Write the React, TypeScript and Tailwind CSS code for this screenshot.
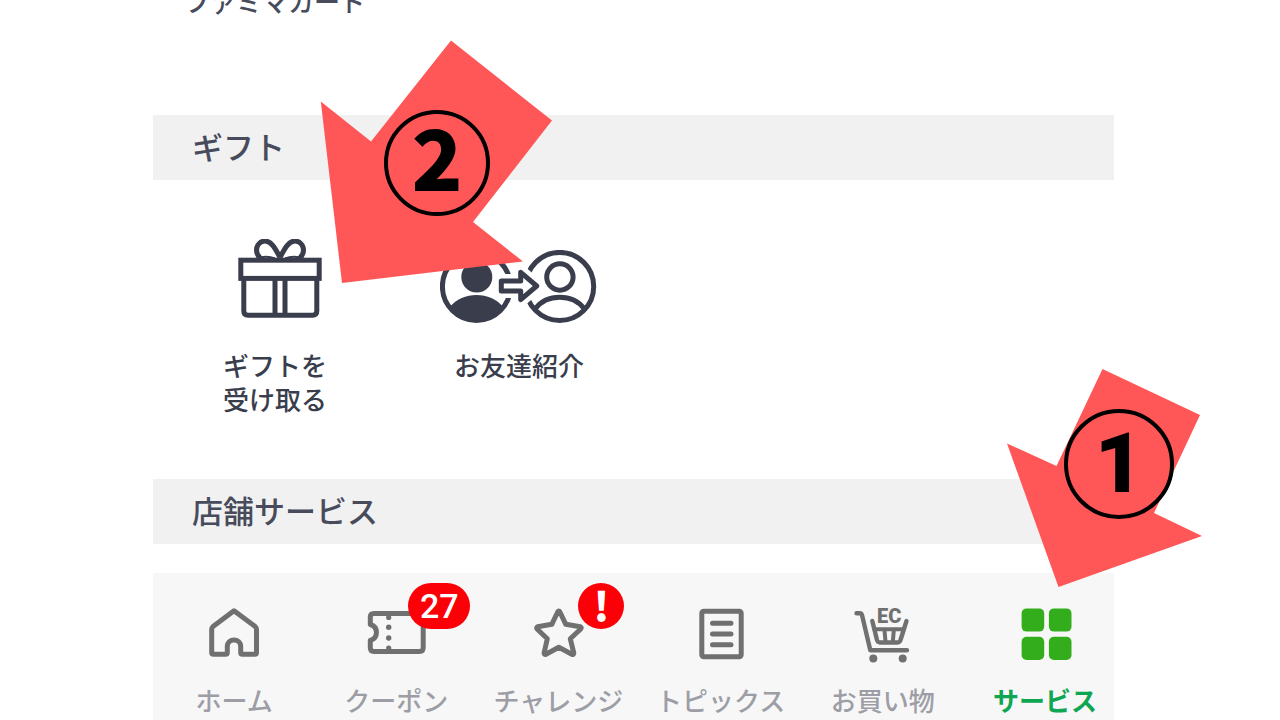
import type { ReactNode } from 'react';

function GiftIcon() {
  return (
    <svg aria-hidden="true" width="96" height="84" viewBox="0 2 96 84" fill="none" stroke="currentColor" strokeWidth="5">
      <path d="M53 20.500C49 13 45 4 38 4C33.500 4 29.500 8 29.500 13C29.500 16.500 31 19.500 34 21.500" />
      <path d="M53 20.500C57 13 61 4 68 4C72.500 4 76.500 8 76.500 13C76.500 16.500 75 19.500 72 21.500" />
      <path d="M33 20.500Q41 18.500 48 21.500M73 20.500Q65 18.500 58 21.500" strokeWidth="2" />
      <rect x="13.800" y="23.200" width="78.400" height="18.200" />
      <path d="M16.800 43V74Q16.800 78.200 21 78.200H85.600Q89.800 78.200 89.800 74V43M48 42V78M58 42V78" />
    </svg>
  );
}

function FriendsIcon() {
  return (
    <svg aria-hidden="true" width="158" height="73" viewBox="0 0 158 73" fill="none" stroke="currentColor" strokeWidth="5">
      <circle cx="36.400" cy="36.400" r="34" />
      <circle cx="36.800" cy="27" r="15.500" fill="currentColor" stroke="none" />
      <path d="M10 57C22 41 51 41 63 57C51 76 22 76 10 57Z" fill="currentColor" stroke="none" />
      <circle cx="119.700" cy="36.400" r="34" />
      <circle cx="119.900" cy="27" r="13.200" />
      <path d="M95.500 58.500C107 43.500 132.500 43.500 144 58.500" />
      <path d="M61.300 31H80.700V22.300L96.700 36L80.700 49.700V41H61.300Z" fill="white" stroke="white" strokeWidth="14" />
      <path d="M61.300 31H80.700V22.300L96.700 36L80.700 49.700V41H61.300Z" fill="white" strokeLinejoin="round" />
    </svg>
  );
}

function HomeIcon() {
  return (
    <svg aria-hidden="true" width="56" height="56" viewBox="0 0 56 56" fill="none" stroke="currentColor" strokeWidth="5" strokeLinejoin="round">
      <path d="M28 5.800L7 21.600Q5.700 22.700 5.700 24.500V47.500Q5.700 49.300 7.500 49.300H19.500Q21.300 49.300 21.300 47.500V41.500C21.300 32.800 34.700 32.800 34.700 41.500V47.500Q34.700 49.300 36.500 49.300H48.700Q50.500 49.300 50.500 47.500V24.500Q50.500 22.700 49.200 21.600Z" />
    </svg>
  );
}

function TicketIcon() {
  return (
    <svg aria-hidden="true" width="64" height="56" viewBox="0 0 64 56" fill="none" stroke="currentColor" strokeWidth="5" strokeLinejoin="round">
      <path d="M10 8.400H55.500Q59.200 8.400 59.200 12V42.800Q59.200 46.500 55.500 46.500H10Q6.300 46.500 6.300 42.800V35.500C14.500 33 14.500 22 6.300 19.500V12Q6.300 8.400 10 8.400Z" />
      <g fill="currentColor" stroke="none">
        <circle cx="24.700" cy="12.500" r="2.600" />
        <circle cx="24.700" cy="22.300" r="2.700" />
        <circle cx="24.700" cy="33" r="2.700" />
        <circle cx="24.700" cy="43" r="2.600" />
      </g>
    </svg>
  );
}

function StarIcon() {
  return (
    <svg aria-hidden="true" width="56" height="56" viewBox="-1 0 56 56" fill="none" stroke="currentColor" strokeWidth="5" strokeLinejoin="round">
      <path d="M26.700 7Q27.800 5 28.900 7L34.800 19.300L49.300 21.800Q51 22.700 49.700 24L39.300 33.800L42.800 48Q42.600 50 40.800 49.300L27.800 42.200L15 49.300Q13 49.800 13.100 48L16.300 33.800L6.100 24Q5 22.700 6.600 21.800L20.800 19.300Z" />
    </svg>
  );
}

function ListIcon() {
  return (
    <svg aria-hidden="true" width="56" height="56" viewBox="0 0 56 56" fill="none" stroke="currentColor" strokeWidth="5" strokeLinecap="round">
      <rect x="8.800" y="6.200" width="39.400" height="45.600" rx="2" />
      <path d="M19.500 18.300H38M19.500 29H38M19.500 39.700H38" />
    </svg>
  );
}

function CartIcon() {
  return (
    <svg aria-hidden="true" width="60" height="58" viewBox="0 0 60 58" fill="none" stroke="currentColor" strokeWidth="4.400" strokeLinecap="round" strokeLinejoin="round" className="-mb-0.5">
      <path d="M3.500 8.200H6.500Q8.500 8.200 9 10L17.300 45.200H54" />
      <path d="M19.300 16L24 35Q24.700 37.500 27 37.500H44.500Q46.800 37.500 47.500 35L53.500 16" />
      <path d="M21.500 24.300H50.500M31.500 25L32.500 37M40.800 25L39.800 37" strokeWidth="4" />
      <circle cx="20.300" cy="53.500" r="4" fill="currentColor" stroke="none" />
      <circle cx="49.700" cy="53.500" r="4" fill="currentColor" stroke="none" />
      <text x="24" y="18" fill="currentColor" stroke="none" className="font-['Roboto',sans-serif] text-[20px] font-black">EC</text>
    </svg>
  );
}

function GridIcon() {
  return (
    <svg aria-hidden="true" width="56" height="56" viewBox="-1 0 56 56" fill="#34ad1c">
      <rect x="3.600" y="3.400" width="22.600" height="23.200" rx="5" />
      <rect x="30.900" y="3.400" width="22.600" height="23.200" rx="5" />
      <rect x="3.600" y="31.800" width="22.600" height="23.200" rx="5" />
      <rect x="30.900" y="31.800" width="22.600" height="23.200" rx="5" />
    </svg>
  );
}

function SectionTitle({ children }: { children: ReactNode }) {
  return (
    <h2 className="h-[65px] bg-[#f1f1f1] px-[39px] pt-3 text-[31px] leading-[38px] font-medium text-[#474b5b]">
      {children}
    </h2>
  );
}

function Service({ icon, children }: { icon: ReactNode; children: ReactNode }) {
  return (
    <a href="#service" className="flex w-[244px] flex-col items-center text-center text-[#393d4c]">
      <span className="flex h-[94px] items-end">{icon}</span>
      <span className="mt-[25px] text-[26px] leading-[34px] font-medium">{children}</span>
    </a>
  );
}

type Tab = { label: string; icon: ReactNode; badge?: ReactNode; active?: boolean };

const tabs: Tab[] = [
  { label: 'ホーム', icon: <HomeIcon /> },
  {
    label: 'クーポン',
    icon: <TicketIcon />,
    badge: (
      <span className="absolute top-2.5 left-1/2 ml-3 flex h-[46px] w-[62px] items-center justify-center rounded-full bg-[#fb0007] font-['Roboto',sans-serif] text-[34px] leading-none font-medium text-white">
        27
      </span>
    ),
  },
  {
    label: 'チャレンジ',
    icon: <StarIcon />,
    badge: (
      <span className="absolute top-2.5 left-1/2 ml-5 flex size-[46px] items-center justify-center rounded-full bg-[#fb0007] pb-1 font-['Noto_Sans_CJK_JP',sans-serif] text-[40px] leading-none font-black text-white">
        !
      </span>
    ),
  },
  { label: 'トピックス', icon: <ListIcon /> },
  { label: 'お買い物', icon: <CartIcon /> },
  { label: 'サービス', icon: <GridIcon />, active: true },
];

export default function App() {
  return (
    <div className="relative min-h-screen overflow-hidden bg-white pr-[166px] pl-[153px] font-['Noto_Sans_CJK_JP',sans-serif]">
      <main>
        <div className="flex h-[115px]">
          <a href="#card" className="-mt-4 w-[244px] text-center text-[26px] leading-[34px] font-medium text-[#474b5b]">
            ファミマカード
          </a>
        </div>
        <SectionTitle>ギフト</SectionTitle>
        <div className="flex h-[299px] pt-[49px]">
          <Service icon={<GiftIcon />}>
            ギフトを
            <br />
            受け取る
          </Service>
          <Service icon={<FriendsIcon />}>お友達紹介</Service>
        </div>
        <SectionTitle>店舗サービス</SectionTitle>
      </main>

      <nav aria-label="メイン" className="mt-[29px] overflow-hidden bg-[#f7f7f7]">
        <ul className="-mr-3 grid grid-cols-6">
          {tabs.map((tab) => (
            <li key={tab.label}>
              <a href="#tab" className="relative flex h-[147px] flex-col items-center pt-8 text-[#707070]">
                {tab.icon}
                {tab.badge}
                <span
                  className={
                    tab.active
                      ? 'mt-[22px] text-[26px] leading-[34px] font-bold whitespace-nowrap text-[#0fa653]'
                      : 'mt-[22px] text-[26px] leading-[34px] font-medium whitespace-nowrap text-[#9d9ea5]'
                  }
                >
                  {tab.label}
                </span>
              </a>
            </li>
          ))}
        </ul>
      </nav>

      <div className="absolute top-10 left-80 h-[244px] w-[234px]">
        <svg aria-hidden="true" width="234" height="244" viewBox="0 0 234 244" fill="#ff5757">
          <path d="M131 0.500L232 80.500L153 182L203 221.500L22 243L0.800 61.500L51 101.500Z" />
        </svg>
        <span className="absolute top-[70px] left-16 flex size-[106px] items-center justify-center rounded-full border-4 border-black pb-4 text-[84px] leading-none font-black text-black">
          2
        </span>
      </div>

      <div className="absolute top-[369px] left-[1007px] h-[218px] w-[195px]">
        <svg aria-hidden="true" width="195" height="218" viewBox="0 0 195 218" fill="#ff5757">
          <path d="M95.500 0L193 46L147 144L195 167L51.500 218L0 74.500L49.500 97Z" />
        </svg>
        <span className="absolute top-10 left-[57px] flex size-[110px] items-center justify-center rounded-full border-4 border-black font-['Roboto',sans-serif] text-[84px] leading-none font-black text-black">
          1
        </span>
      </div>
    </div>
  );
}
